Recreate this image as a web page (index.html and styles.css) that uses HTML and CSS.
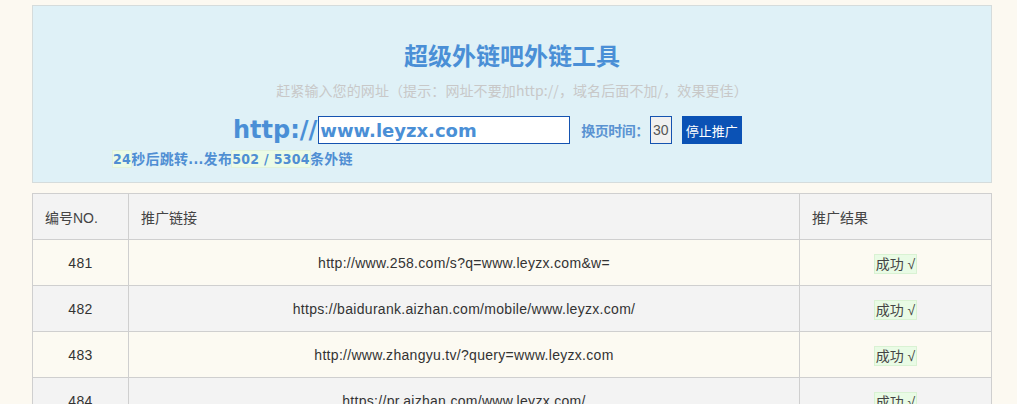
FILE: index.html
```html
<!DOCTYPE html>
<html lang="zh-CN">
<head>
<meta charset="utf-8">
<title>超级外链吧外链工具</title>
<link rel="stylesheet" href="styles.css">
</head>
<body>
<div class="page">
  <div class="hero">
    <h1 class="title">超级外链吧外链工具</h1>
    <p class="hint">赶紧输入您的网址（提示：网址不要加http://，域名后面不加/，效果更佳）</p>
    <div class="form-row">
      <span class="proto">http://</span>
      <input class="url-input" type="text" value="www.leyzx.com">
      <span class="label">换页时间：</span>
      <input class="time-input" type="text" value="30">
      <button class="stop-btn">停止推广</button>
    </div>
    <div class="status"><span class="hl">24</span>秒后跳转...发布<span class="hl">502 / 5304</span>条外链</div>
  </div>

  <table class="result">
    <thead>
      <tr><th class="c-no">编号NO.</th><th class="c-link">推广链接</th><th class="c-res">推广结果</th></tr>
    </thead>
    <tbody>
      <tr><td>481</td><td>http://www.258.com/s?q=www.leyzx.com&amp;w=</td><td><span class="ok">成功 √</span></td></tr>
      <tr><td>482</td><td>https://baidurank.aizhan.com/mobile/www.leyzx.com/</td><td><span class="ok">成功 √</span></td></tr>
      <tr><td>483</td><td>http://www.zhangyu.tv/?query=www.leyzx.com</td><td><span class="ok">成功 √</span></td></tr>
      <tr><td>484</td><td>https://pr.aizhan.com/www.leyzx.com/</td><td><span class="ok">成功 √</span></td></tr>
    </tbody>
  </table>
</div>
</body>
</html>
```
FILE: styles.css
```css
html, body {
  margin: 0;
  padding: 0;
  background: #fcf9f1;
}
body {
  font-family: "Liberation Sans", "Noto Sans CJK SC", sans-serif;
  font-size: 14px;
  color: #333;
  overflow: hidden;
}
.page {
  width: 960px;
  margin-left: 32px;
  padding-top: 5px;
}
.hero {
  background: #dff1f7;
  border: 1px solid #d5dcdc;
  height: 178px;
  box-sizing: border-box;
  padding-top: 34px;
}
.title {
  margin: 0;
  text-align: center;
  font-family: "Noto Sans CJK SC", sans-serif;
  font-size: 24px;
  font-weight: bold;
  line-height: 30px;
  color: #4a8fd6;
}
.hint {
  margin: 11px 0 0;
  text-align: center;
  font-family: "Noto Sans CJK SC", sans-serif;
  font-size: 14px;
  line-height: 18px;
  color: #c8c8c8;
  letter-spacing: 0.1px;
}
.form-row {
  display: flex;
  align-items: center;
  padding-left: 200px;
  margin-top: 17px;
  height: 28px;
}
.proto {
  font-family: "DejaVu Sans", sans-serif;
  font-weight: bold;
  font-size: 24px;
  color: #4a8fd6;
  line-height: 28px;
  margin-right: 1px;
}
.url-input {
  width: 252px;
  height: 28px;
  box-sizing: border-box;
  border: 1px solid #1553b0;
  padding: 0 1px;
  margin: 0;
  font-family: "DejaVu Sans", sans-serif;
  font-weight: bold;
  font-size: 18px;
  color: #4a8fd6;
  background: #fff;
  outline: none;
}
.label {
  margin-left: 11px;
  font-family: "Noto Sans CJK SC", sans-serif;
  font-weight: bold;
  font-size: 14px;
  color: #5a93d2;
  letter-spacing: -0.5px;
}
.time-input {
  margin-left: 1px;
  width: 22px;
  height: 28px;
  box-sizing: border-box;
  border: 1px solid #1553b0;
  background: #f0f0f0;
  padding: 0;
  text-align: center;
  font-family: "Liberation Sans", sans-serif;
  font-size: 14px;
  color: #555;
  outline: none;
}
.stop-btn {
  margin-left: 10px;
  width: 60px;
  height: 28px;
  border: 0;
  padding: 0;
  background: #0b52b5;
  color: #fff;
  font-family: "Noto Sans CJK SC", sans-serif;
  font-size: 13px;
}
.status {
  margin: 7px 0 0 80px;
  font-family: "DejaVu Sans Condensed", "DejaVu Sans", "Noto Sans CJK SC", sans-serif;
  font-weight: bold;
  font-size: 14px;
  line-height: 16px;
  color: #4f8ed3;
  letter-spacing: 0.3px;
}
.hl {
  background: #ebfbe6;
  outline: 1px solid #e1f2dc;
}
.result {
  margin-top: 10px;
  width: 960px;
  border-collapse: collapse;
  border: 1px solid #cfcfcf;
}
.result th, .result td {
  border: 1px solid #cfcfcf;
  height: 45px;
  padding: 0 12px;
  font-weight: normal;
  letter-spacing: 0.3px;
}
.result th {
  background: #f3f3f3;
  text-align: left;
  color: #444;
  letter-spacing: 0;
}
.result td {
  text-align: center;
  color: #333;
}
.c-no { width: 71px; }
.c-res { width: 167px; }
.result tbody tr:nth-child(odd) td { background: #fcfaf2; }
.result tbody tr:nth-child(even) td { background: #f3f3f3; }
.ok {
  background: #e9fbe5;
  outline: 1px solid #d9f2d3;
  padding: 1px 1px;
  color: #444;
  letter-spacing: 0;
}
```
